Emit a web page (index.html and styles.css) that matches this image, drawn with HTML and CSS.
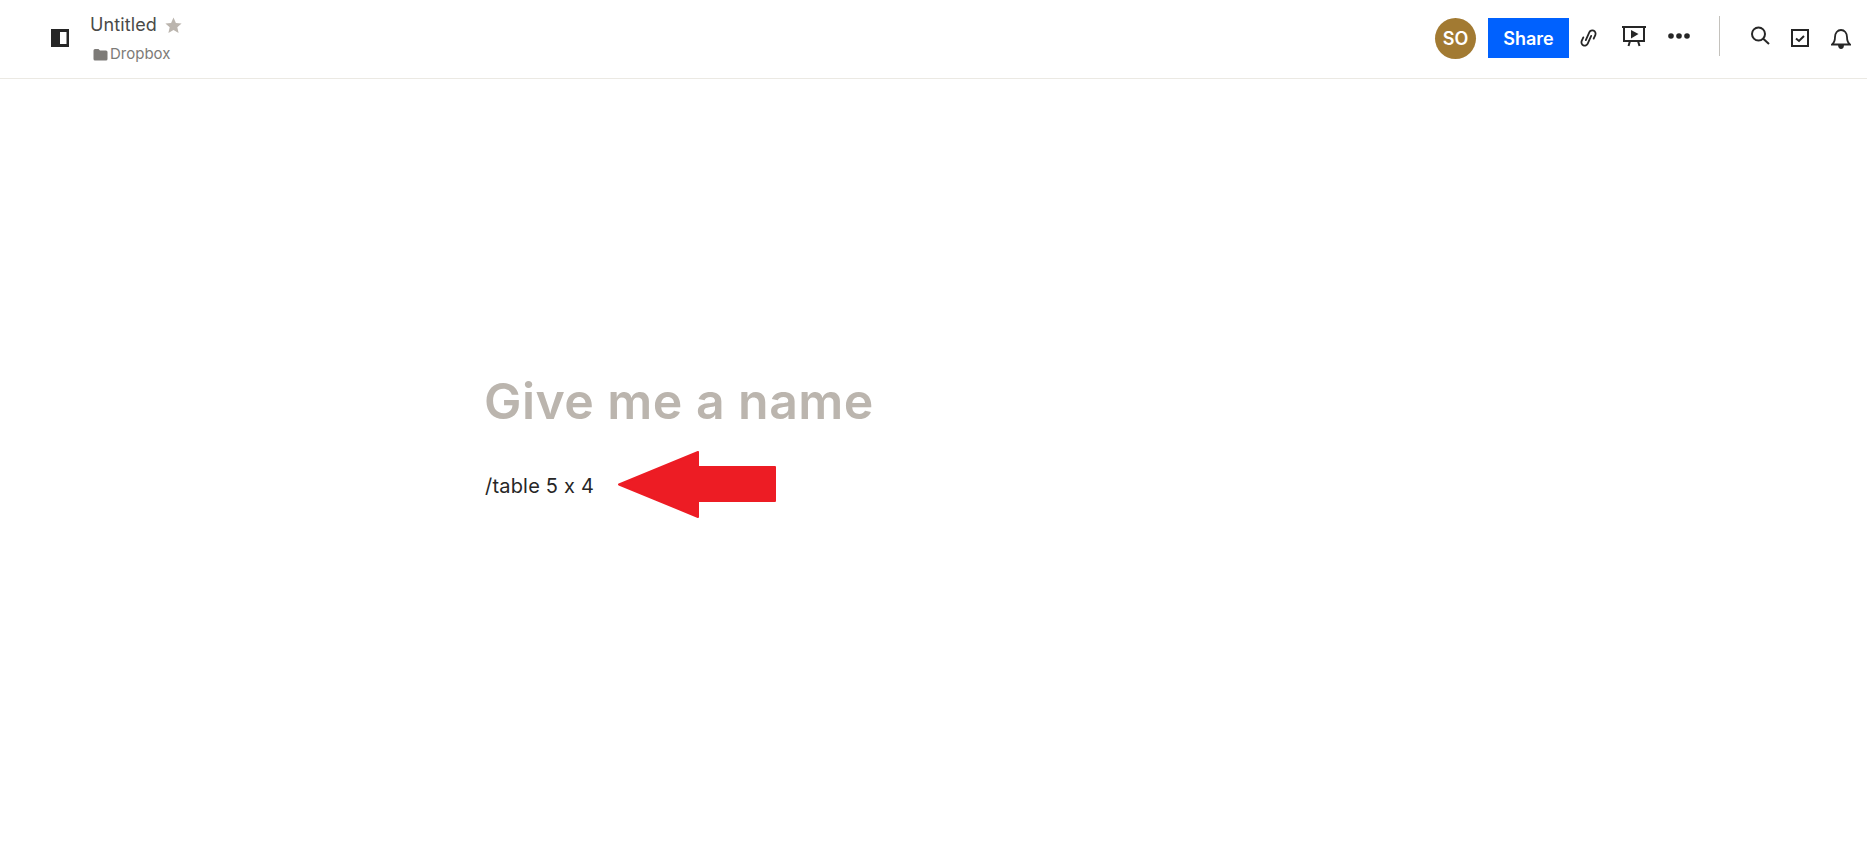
FILE: index.html
```html
<!DOCTYPE html>
<html lang="en">
<head>
<meta charset="utf-8">
<title>Untitled</title>
<link rel="stylesheet" href="styles.css">
</head>
<body>
<header class="topbar">
  <div class="left">
    <button class="icon-btn panel-btn" aria-label="Toggle sidebar">
      <svg width="18" height="18" viewBox="0 0 18 18"><path fill="#262626" fill-rule="evenodd" d="M0 0h18v18H0zM9 3v12h6.500V3z"/></svg>
    </button>
    <div class="doc-info">
      <div class="doc-title"><span>Untitled</span>
        <svg class="star" width="17" height="17" viewBox="0 0 17 17"><path fill="#bbb5ae" d="M8.500.6l2.400 5.300 5.700.6-4.300 3.800 1.300 5.700-5.100-3-5.100 3 1.300-5.700L.4 6.500l5.700-.6z"/></svg>
      </div>
      <div class="doc-path">
        <svg width="15" height="13" viewBox="0 0 15 13"><path fill="#7d7b78" d="M.5 2.500A1.500 1.500 0 0 1 2 1h3.500L7 2.500h6A1.500 1.500 0 0 1 14.500 4v7a1.500 1.500 0 0 1-1.500 1.500H2A1.500 1.500 0 0 1 .5 11z"/></svg>
        <span>Dropbox</span>
      </div>
    </div>
  </div>
  <div class="right">
    <div class="avatar">SO</div>
    <button class="share">Share</button>
    <button class="icon-btn link-btn" aria-label="Copy link">
      <svg width="20" height="22" viewBox="0 0 20 22" fill="none" stroke="#262626" stroke-width="1.800" stroke-linecap="round"><g transform="translate(9.500 11) rotate(24)"><path d="M-1.600 3V-5.500a3.300 3.300 0 0 1 6.600 0V-1.500"/><path d="M1.600-3V5.500a3.300 3.300 0 0 1-6.600 0V1.500"/></g></svg>
    </button>
    <button class="icon-btn present-btn" aria-label="Present">
      <svg width="24" height="22" viewBox="0 0 24 22" fill="none" stroke="#262626" stroke-width="2"><path d="M0 2h24"/><path d="M2 2v14h20V2"/><path d="m6.500 21 1.500-5M17.500 21 16 16"/><path fill="#262626" stroke="none" d="M9 5v8.500L16.500 9z"/></svg>
    </button>
    <button class="icon-btn more-btn" aria-label="More">
      <svg width="22" height="6" viewBox="0 0 22 6"><circle cx="3" cy="3" r="2.800" fill="#262626"/><circle cx="11" cy="3" r="2.800" fill="#262626"/><circle cx="19" cy="3" r="2.800" fill="#262626"/></svg>
    </button>
    <div class="divider"></div>
    <button class="icon-btn search-btn" aria-label="Search">
      <svg width="20" height="20" viewBox="0 0 20 20" fill="none" stroke="#262626" stroke-width="2"><circle cx="8.500" cy="8" r="6.500"/><path d="m13 12.500 6 5.500"/></svg>
    </button>
    <button class="icon-btn check-btn" aria-label="Tasks">
      <svg width="18" height="18" viewBox="0 0 18 18" fill="none" stroke="#262626"><rect x="1" y="1" width="16" height="16" stroke-width="2"/><path stroke-width="2" d="m5 9.500 3 2.500 5-5"/></svg>
    </button>
    <button class="icon-btn bell-btn" aria-label="Notifications">
      <svg width="20" height="21" viewBox="0 0 20 21" fill="none" stroke="#262626" stroke-width="1.800"><path d="M1 16.500c2.500-2 3-3.500 3-7.500 0-4 2.500-7 6-7s6 3 6 7c0 4 .5 5.500 3 7.500z"/><path fill="#262626" d="M8 17.500h4c0 1.500-1 2.500-2 2.500s-2-1-2-2.500z"/></svg>
    </button>
  </div>
</header>
<main class="doc">
  <h1 class="doc-heading">Give me a name</h1>
  <p class="doc-line">/table 5 x 4</p>
</main>
<svg class="arrow" width="159" height="67" viewBox="0 0 159 67"><path fill="#ed1c24" stroke="#ed1c24" stroke-width="2" stroke-linejoin="round" d="M1 33.500 80 1v15h77v34H80v16z"/></svg>
</body>
</html>
```
FILE: styles.css
```css
* { box-sizing: border-box; }
html, body { margin: 0; height: 100%; }
body {
  background: #fff;
  color: #262626;
  font-family: Inter, "Liberation Sans", Arial, sans-serif;
  font-feature-settings: "calt" 0;
  overflow: hidden;
  position: relative;
}
button { font-family: inherit; font-feature-settings: inherit; border: 0; background: none; padding: 0; }
.topbar {
  height: 79px;
  border-bottom: 1px solid #ebe9e3;
  display: flex;
  justify-content: space-between;
  align-items: flex-start;
}
.left { display: flex; align-items: flex-start; padding-left: 51px; }
.right { display: flex; align-items: flex-start; padding-right: 16px; padding-top: 18px; }
.icon-btn { display: flex; align-items: center; justify-content: center; line-height: 0; }
.panel-btn { margin-top: 29px; margin-right: 21px; }
.doc-info { padding-top: 13px; }
.doc-title { display: flex; align-items: center; gap: 8px; font-size: 18px; letter-spacing: .1px; color: #4a4a48; line-height: 24px; height: 24px; }
.doc-path { display: flex; align-items: center; gap: 2px; margin-top: 7px; margin-left: 3px; font-size: 15px; color: #7d7b78; line-height: 20px; }
.avatar {
  width: 41px; height: 41px; border-radius: 50%;
  background: #a27a32; color: #fff;
  font-size: 18px; font-weight: 600;
  display: flex; align-items: center; justify-content: center;
}
.share {
  width: 81px; height: 40px; margin-left: 12px;
  background: #0061fe; color: #fff;
  font-size: 18px; font-weight: 600;
}
.link-btn { margin-left: 10px; margin-top: 9px; }
.present-btn { margin-left: 23px; margin-top: 7px; }
.more-btn { margin-left: 22px; margin-top: 15px; }
.divider { width: 1px; height: 40px; background: #c4c2bd; margin-left: 29px; margin-top: -2px; }
.search-btn { margin-left: 30px; margin-top: 8px; }
.check-btn { margin-left: 21px; margin-top: 11px; }
.bell-btn { margin-left: 22px; margin-top: 10px; }
.doc { padding: 292px 0 0 484px; }
.doc-heading { margin: 0; font-size: 50px; letter-spacing: .45px; line-height: 60px; font-weight: 600; color: #bbb5ae; }
.doc-line { margin: 41px 0 0 1px; font-size: 20px; letter-spacing: .2px; line-height: 28px; color: #262626; }
.arrow { position: absolute; left: 618px; top: 451px; }
```
